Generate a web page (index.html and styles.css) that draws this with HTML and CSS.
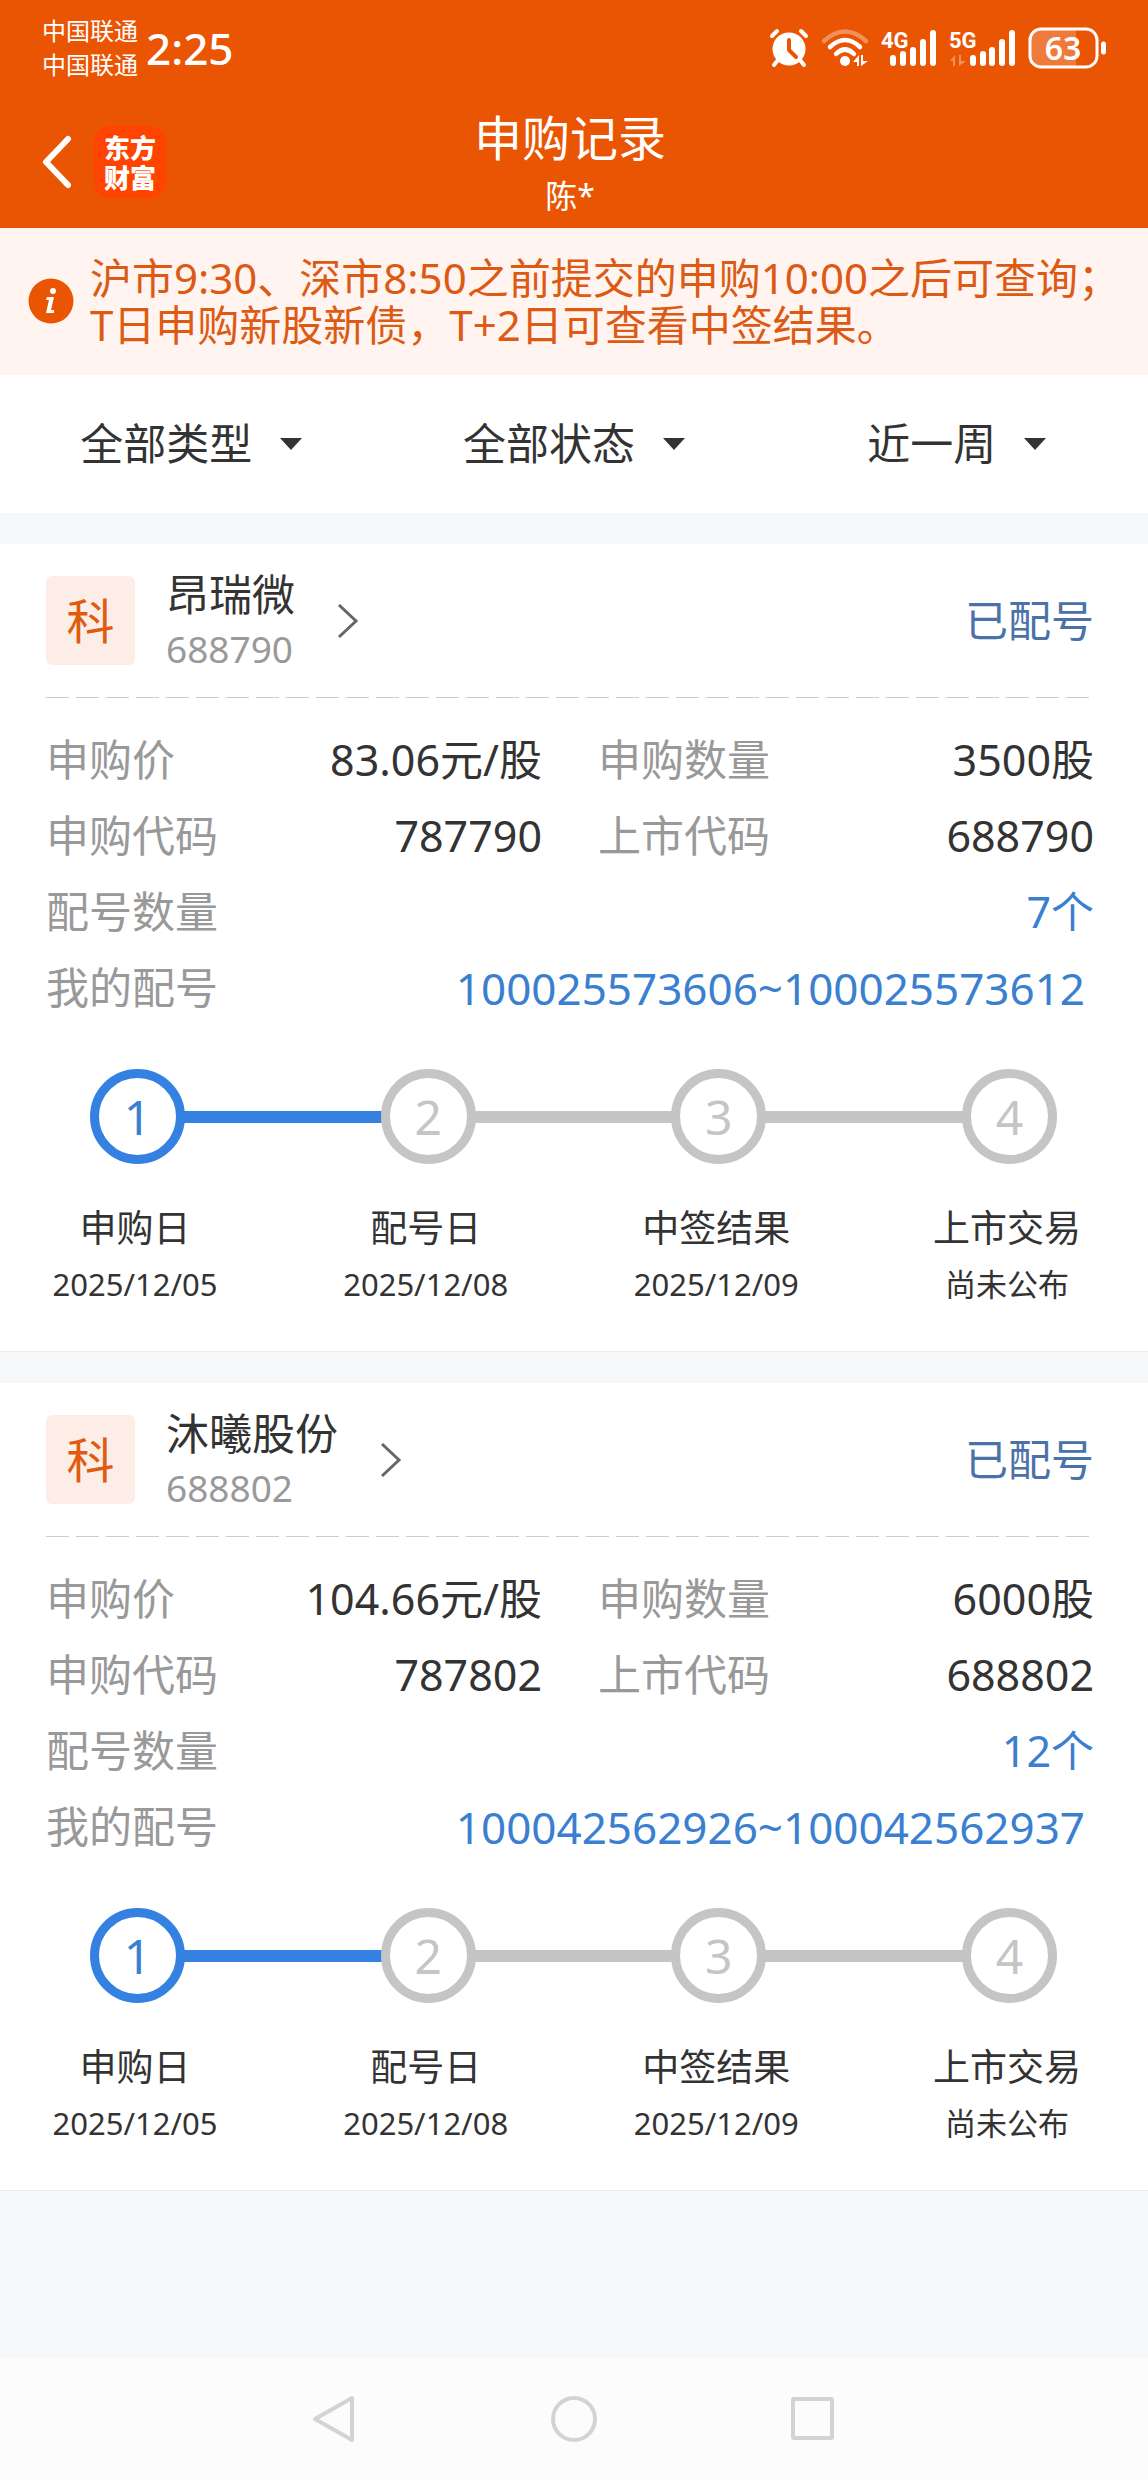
FILE: index.html
```html
<!DOCTYPE html>
<html lang="zh-CN">
<head>
<meta charset="UTF-8">
<meta name="viewport" content="width=device-width, initial-scale=1">
<title>申购记录</title>
<link rel="stylesheet" href="styles.css">
</head>
<body>

<header class="header">
  <div class="status-bar">
    <div class="carriers">
      <span>中国联通</span>
      <span>中国联通</span>
    </div>
    <time class="clock">2:25</time>
    <div class="status-icons">
      <!-- 闹钟 -->
      <svg width="40" height="40" viewBox="0 0 40 40">
        <circle cx="20" cy="21" r="16.5" fill="#fff"/>
        <g stroke="#fff" stroke-width="4" stroke-linecap="round">
          <path d="M3 8l5-5M37 8l-5-5M9 32l-4 5M31 32l4 5"/>
        </g>
        <path d="M20 12v10l7 7" fill="none" stroke="#ea5504" stroke-width="4" stroke-linecap="round" stroke-linejoin="round"/>
      </svg>
      <!-- 无线网络 -->
      <svg width="48" height="40" viewBox="0 0 48 40">
        <g fill="none" stroke="#fff" stroke-width="4.500" stroke-linecap="round">
          <path d="M3 13Q24-6 45 13" opacity=".35"/>
          <path d="M9 19Q24 5 39 19"/>
          <path d="M15 26Q24 17 33 26"/>
        </g>
        <circle cx="24" cy="33" r="5" fill="#fff"/>
        <path d="M32 34l6-7v11h-2v-4zM40 38V27h2v6h5z" fill="#fff"/>
      </svg>
      <!-- 4G 信号 -->
      <svg class="signal" width="56" height="40" viewBox="0 0 56 40">
        <text x="0" y="20">4G</text>
        <g stroke="#fff" stroke-width="6" stroke-linecap="round">
          <path d="M12 30v5M22 26v9M32 22v13M42 14v21M52 5v30"/>
        </g>
      </svg>
      <!-- 5G 信号 -->
      <svg class="signal" width="67" height="40" viewBox="0 0 67 40">
        <text x="0" y="20">5G</text>
        <path d="M1 33l5-6v11H4v-5zM10 38V27h2v6h5z" fill="#fff" opacity=".35"/>
        <g stroke="#fff" stroke-width="6" stroke-linecap="round">
          <path d="M24 30v5M34 26v9M43 22v13M53 14v21M63 5v30"/>
        </g>
      </svg>
      <!-- 电量 -->
      <svg class="battery" width="79" height="42" viewBox="0 0 79 42">
        <path d="M12 3h36v36H12a9 9 0 0 1-9-9V12a9 9 0 0 1 9-9z" fill="#fff" opacity=".22"/>
        <rect x="2" y="2" width="67" height="38" rx="11" fill="none" stroke="#fff" stroke-width="3"/>
        <path d="M75.500 17v8" stroke="#fff" stroke-width="5" stroke-linecap="round"/>
        <text x="35" y="33" text-anchor="middle">63</text>
      </svg>
    </div>
  </div>

  <div class="title-bar">
    <div class="title-left">
      <button class="back" aria-label="返回">
        <svg width="30" height="54" viewBox="0 0 30 54"><path d="M26 4L4 27l22 23" fill="none" stroke="#fff" stroke-width="6" stroke-linecap="round" stroke-linejoin="round"/></svg>
      </button>
      <a class="logo" href="#">东方<br>财富</a>
    </div>
    <div class="title-text">
      <h1>申购记录</h1>
      <p>陈*</p>
    </div>
  </div>
</header>

<div class="notice">
  <svg width="46" height="46" viewBox="0 0 46 46">
    <circle cx="23" cy="23" r="22.500" fill="#ea5504"/>
    <circle cx="25" cy="13" r="3" fill="#fff"/>
    <path d="M19 19h7l-3 13h3v3h-8l3-13h-3z" fill="#fff"/>
  </svg>
  <p>沪市9:30、深市8:50之前提交的申购10:00之后可查询；<br>T日申购新股新债，T+2日可查看中签结果。</p>
</div>

<form class="filters">
  <label class="filter">
    <select aria-label="类型"><option>全部类型</option></select>
    <svg width="22" height="12" viewBox="0 0 22 12"><path d="M0 0h22L11 12z" fill="#333"/></svg>
  </label>
  <label class="filter">
    <select aria-label="状态"><option>全部状态</option></select>
    <svg width="22" height="12" viewBox="0 0 22 12"><path d="M0 0h22L11 12z" fill="#333"/></svg>
  </label>
  <label class="filter">
    <select aria-label="时间"><option>近一周</option></select>
    <svg width="22" height="12" viewBox="0 0 22 12"><path d="M0 0h22L11 12z" fill="#333"/></svg>
  </label>
</form>

<main class="list">
  <section class="card">
    <div class="card-head">
      <span class="board">科</span>
      <a class="stock" href="#">
        <span class="stock-text">
          <span class="stock-name">昂瑞微</span>
          <span class="stock-code">688790</span>
        </span>
        <svg width="22" height="36" viewBox="0 0 22 36"><path d="M2 2l17 16L2 34" fill="none" stroke="#666" stroke-width="3"/></svg>
      </a>
      <span class="state">已配号</span>
    </div>
    <dl class="info">
      <div><dt>申购价</dt><dd>83.06元/股</dd></div>
      <div><dt>申购数量</dt><dd>3500股</dd></div>
      <div><dt>申购代码</dt><dd>787790</dd></div>
      <div><dt>上市代码</dt><dd>688790</dd></div>
      <div class="wide"><dt>配号数量</dt><dd class="blue">7个</dd></div>
      <div class="wide"><dt>我的配号</dt><dd class="blue numbers">100025573606~100025573612</dd></div>
    </dl>
    <div class="track">
      <span class="dot active">1</span><i class="line active"></i>
      <span class="dot">2</span><i class="line"></i>
      <span class="dot">3</span><i class="line"></i>
      <span class="dot">4</span>
    </div>
    <ol class="steps">
      <li><b>申购日</b><span>2025/12/05</span></li>
      <li><b>配号日</b><span>2025/12/08</span></li>
      <li><b>中签结果</b><span>2025/12/09</span></li>
      <li><b>上市交易</b><span>尚未公布</span></li>
    </ol>
  </section>

  <section class="card">
    <div class="card-head">
      <span class="board">科</span>
      <a class="stock" href="#">
        <span class="stock-text">
          <span class="stock-name">沐曦股份</span>
          <span class="stock-code">688802</span>
        </span>
        <svg width="22" height="36" viewBox="0 0 22 36"><path d="M2 2l17 16L2 34" fill="none" stroke="#666" stroke-width="3"/></svg>
      </a>
      <span class="state">已配号</span>
    </div>
    <dl class="info">
      <div><dt>申购价</dt><dd>104.66元/股</dd></div>
      <div><dt>申购数量</dt><dd>6000股</dd></div>
      <div><dt>申购代码</dt><dd>787802</dd></div>
      <div><dt>上市代码</dt><dd>688802</dd></div>
      <div class="wide"><dt>配号数量</dt><dd class="blue">12个</dd></div>
      <div class="wide"><dt>我的配号</dt><dd class="blue numbers">100042562926~100042562937</dd></div>
    </dl>
    <div class="track">
      <span class="dot active">1</span><i class="line active"></i>
      <span class="dot">2</span><i class="line"></i>
      <span class="dot">3</span><i class="line"></i>
      <span class="dot">4</span>
    </div>
    <ol class="steps">
      <li><b>申购日</b><span>2025/12/05</span></li>
      <li><b>配号日</b><span>2025/12/08</span></li>
      <li><b>中签结果</b><span>2025/12/09</span></li>
      <li><b>上市交易</b><span>尚未公布</span></li>
    </ol>
  </section>
</main>

<!-- 系统导航键 -->
<nav class="sys-nav">
  <button aria-label="返回">
    <svg width="48" height="48" viewBox="0 0 48 48"><path d="M41 3v42L4 24z"/></svg>
  </button>
  <button aria-label="主屏幕">
    <svg width="48" height="48" viewBox="0 0 48 48"><circle cx="24" cy="24" r="21"/></svg>
  </button>
  <button aria-label="最近任务">
    <svg width="48" height="48" viewBox="0 0 48 48"><rect x="4" y="4" width="39" height="39" rx="1"/></svg>
  </button>
</nav>

</body>
</html>
```
FILE: styles.css
```css
* {
  box-sizing: border-box;
}

body {
  margin: 0;
  min-height: 100vh;
  display: flex;
  flex-direction: column;
  background: #f7f8fa;
  color: #333;
  font-family: "Noto Sans", "Noto Sans CJK SC", sans-serif;
  font-size: 43px;
}

h1, p, dl, dd, ol {
  margin: 0;
  padding: 0;
  font-weight: normal;
}

a {
  color: inherit;
  text-decoration: none;
}

svg {
  display: block;
  flex: none;
  overflow: visible;
}

button, select {
  margin: 0;
  padding: 0;
  border: 0;
  background: none;
  color: inherit;
  font: inherit;
  appearance: none;
}

/* 顶部 */
.header {
  background: #ea5504;
  color: #fff;
}

.status-bar {
  display: flex;
  align-items: center;
  height: 96px;
  padding: 0 41px 0 42px;
}

.carriers {
  display: flex;
  flex-direction: column;
  font-size: 24px;
  line-height: 34px;
}

.clock {
  margin-left: 8px;
  font-size: 44px;
  font-weight: 500;
  line-height: 64px;
}

.status-icons {
  display: flex;
  align-items: center;
  gap: 12px;
  margin-left: auto;
}

.signal text {
  fill: #fff;
  font-family: Roboto, sans-serif;
  font-size: 22px;
  font-weight: 700;
}

.battery text {
  fill: #fff;
  font-size: 32px;
  font-weight: 600;
}

.title-bar {
  display: grid;
  grid-template-columns: 1fr auto 1fr;
  height: 132px;
  padding: 0 50px 0 42px;
}

.title-left {
  display: flex;
  align-items: center;
  gap: 22px;
  height: 132px;
}

.logo {
  width: 72px;
  height: 72px;
  padding-top: 6px;
  border-radius: 16px;
  background: #ff4400;
  font-family: "Noto Sans CJK SC", sans-serif;
  font-size: 26px;
  font-weight: 900;
  line-height: 30px;
  text-align: center;
}

.title-text {
  padding-top: 8px;
  text-align: center;
}

.title-text h1 {
  font-size: 48px;
  line-height: 68px;
}

.title-text p {
  font-size: 32px;
  line-height: 48px;
}

/* 提示 */
.notice {
  display: flex;
  align-items: center;
  gap: 16px;
  padding: 26px 0 27px 28px;
  background: #fff4ef;
  color: #dc5a14;
  font-size: 42px;
  line-height: 47px;
}

.notice p {
  flex: 1;
  white-space: nowrap;
}

/* 筛选 */
.filters {
  display: grid;
  grid-template-columns: repeat(3, 1fr);
  height: 138px;
  background: #fff;
}

.filter {
  display: flex;
  align-items: center;
  justify-content: center;
  gap: 28px;
}

.filter select {
  line-height: 60px;
}

/* 记录列表 */
.list {
  flex: 1;
}

.card {
  margin-top: 31px;
  padding: 32px 0 47px;
  border-bottom: 1px solid #ececec;
  background: #fff;
}

.card-head {
  display: flex;
  align-items: center;
  height: 122px;
  margin: 0 54px 0 46px;
  padding-bottom: 33px;
  background: repeating-linear-gradient(90deg, #ccc 0 23px, transparent 23px 30px) bottom / 100% 1px no-repeat;
}

.board {
  width: 89px;
  height: 89px;
  border-radius: 6px;
  background: #fceee6;
  color: #e05a10;
  font-size: 48px;
  line-height: 89px;
  text-align: center;
}

.stock {
  display: flex;
  align-items: center;
  gap: 42px;
  margin-left: 31px;
}

.stock-text {
  display: flex;
  flex-direction: column;
}

.stock-name {
  line-height: 56px;
}

.stock-code {
  color: #999;
  font-size: 37px;
  line-height: 52px;
}

.state {
  margin-left: auto;
  color: #4a72a8;
  line-height: 60px;
}

.info {
  display: grid;
  grid-template-columns: 1fr 1fr;
  column-gap: 56px;
  padding: 24px 54px 0 46px;
  line-height: 76px;
}

.info div {
  display: flex;
  justify-content: space-between;
}

.info .wide {
  grid-column: 1 / 3;
}

.info dt {
  color: #999;
}

.info .blue {
  color: #3b7fd0;
}

.info .numbers {
  padding-right: 9px;
  font-size: 44px;
}

/* 进度 */
.track {
  display: flex;
  align-items: center;
  margin-top: 43px;
  padding: 0 91px 0 90px;
}

.dot {
  width: 95px;
  height: 95px;
  border: 9px solid #c5c5c5;
  border-radius: 50%;
  color: #c5c5c5;
  font-size: 48px;
  line-height: 77px;
  text-align: center;
}

.dot.active {
  border-color: #3581e2;
  color: #3b7fd0;
}

.line {
  flex: 1;
  height: 12px;
  margin: 0 -2px;
  background: #c5c5c5;
}

.line.active {
  background: #3581e2;
}

.steps {
  display: flex;
  justify-content: space-between;
  margin-top: 40px;
  padding: 0 50px 0 44px;
  list-style: none;
}

.steps li {
  display: flex;
  flex-direction: column;
  gap: 12px;
  width: 182px;
  text-align: center;
}

.steps b {
  font-size: 37px;
  font-weight: normal;
  line-height: 48px;
}

.steps span {
  font-size: 31px;
  line-height: 40px;
}

/* 底部 */
.sys-nav {
  display: flex;
  align-items: center;
  justify-content: center;
  gap: 191px;
  height: 122px;
  background: #fcfcfc;
}

.sys-nav svg {
  fill: none;
  stroke: #d3d3d3;
  stroke-width: 4;
  stroke-linejoin: round;
}
```
